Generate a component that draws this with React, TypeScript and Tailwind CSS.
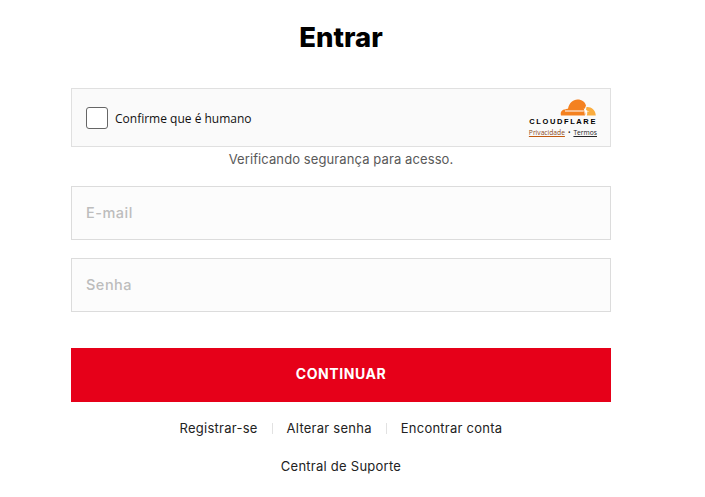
const bodyFont = "font-['Inter','Liberation_Sans',sans-serif]";

function CloudflareLogo() {
  return (
    <svg width="36" height="18" viewBox="0 0 36 18" className="block">
      <path
        d="M1 16.5 C0 13 2 10.5 5 10.5 C6 10 7 9.5 8 9.8 C9 4 13 0.5 17.5 0.5 C22 0.5 25 3 26 6.5 C25.5 8 25 9 24.5 10 C26 14 25.5 15.5 24.8 16.5 Z"
        fill="#f48120"
      />
      <path
        d="M26.5 8 C31 7.5 35.5 10.5 35.8 16.5 L26.8 16.5 C27.6 14 27.5 12 26 10.5 Z"
        fill="#faad3f"
      />
      <path d="M5 11.6 L24 11.4 L23.6 12.4 L5 12.6 Z" fill="#fff" />
      <path d="M23.8 9 L26 11.6 L29.5 12.2 L26 12.8 L24.8 16 L24.4 12.8 Z" fill="#fff" />
    </svg>
  );
}

function Field({ placeholder, type }: { placeholder: string; type: string }) {
  return (
    <input
      type={type}
      placeholder={placeholder}
      className="h-[54px] w-full border border-[#dcdcdc] bg-[#fcfcfc] px-[14px] pb-[2px] text-[14.5px] font-medium tracking-[0.5px] outline-none placeholder:text-[#bdbdbd]"
    />
  );
}

function Divider() {
  return <span className="h-[11px] w-px bg-[#e2e2e2]" />;
}

export default function App() {
  return (
    <div className={`min-h-[497px] w-[682px] bg-white px-[71px] text-[#222] ${bodyFont}`}>
      <h1 className="pt-[20px] text-center text-[27.5px] leading-[34px] font-extrabold text-black">Entrar</h1>

      {/* Turnstile widget */}
      <div className="mt-[34px] flex h-[59px] items-center justify-between border border-[#e0e0e0] bg-[#fafafa] pr-[13px] pl-[14px]">
        <div className="flex items-center gap-[7px]">
          <span className="size-[22px] rounded-[3px] border border-[#666] bg-white" />
          <span className="pt-[3px] font-['Open_Sans',sans-serif] text-[12px] text-[#111]">Confirme que é humano</span>
        </div>
        <div className="flex flex-col items-end">
          <div className="mr-[1px]">
            <CloudflareLogo />
          </div>
          <span className="font-['Liberation_Sans',sans-serif] text-[7.5px] leading-[9px] font-bold tracking-[1.6px] text-black">
            CLOUDFLARE
          </span>
          <div className="mt-[2px] flex items-center gap-[3px] font-['Open_Sans',sans-serif] text-[6.7px] leading-[9px] text-[#232323]">
            <span className="text-[#8a4a1c] underline decoration-[#c05a10]">Privacidade</span>
            <span>•</span>
            <span className="underline">Termos</span>
          </div>
        </div>
      </div>

      <p className="mt-[3px] text-center text-[13px] leading-[18px] tracking-[0.1px] text-[#595959]">Verificando segurança para acesso.</p>

      <div className="mt-[18px] flex flex-col gap-[18px]">
        <Field placeholder="E-mail" type="text" />
        <Field placeholder="Senha" type="password" />
      </div>

      <button className="mt-[36px] h-[54px] w-full bg-[#e60019] pb-[3px] text-[14px] font-bold tracking-[0.55px] text-white">CONTINUAR</button>

      <div className="mt-[17px] flex items-center justify-center gap-[14px] text-[13px] leading-[18px] tracking-[0.25px] text-[#222]">
        <a>Registrar-se</a>
        <Divider />
        <a>Alterar senha</a>
        <Divider />
        <a>Encontrar conta</a>
      </div>
      <div className="mt-[20px] text-center text-[13px] leading-[18px] tracking-[0.25px] text-[#222]">Central de Suporte</div>
    </div>
  );
}
